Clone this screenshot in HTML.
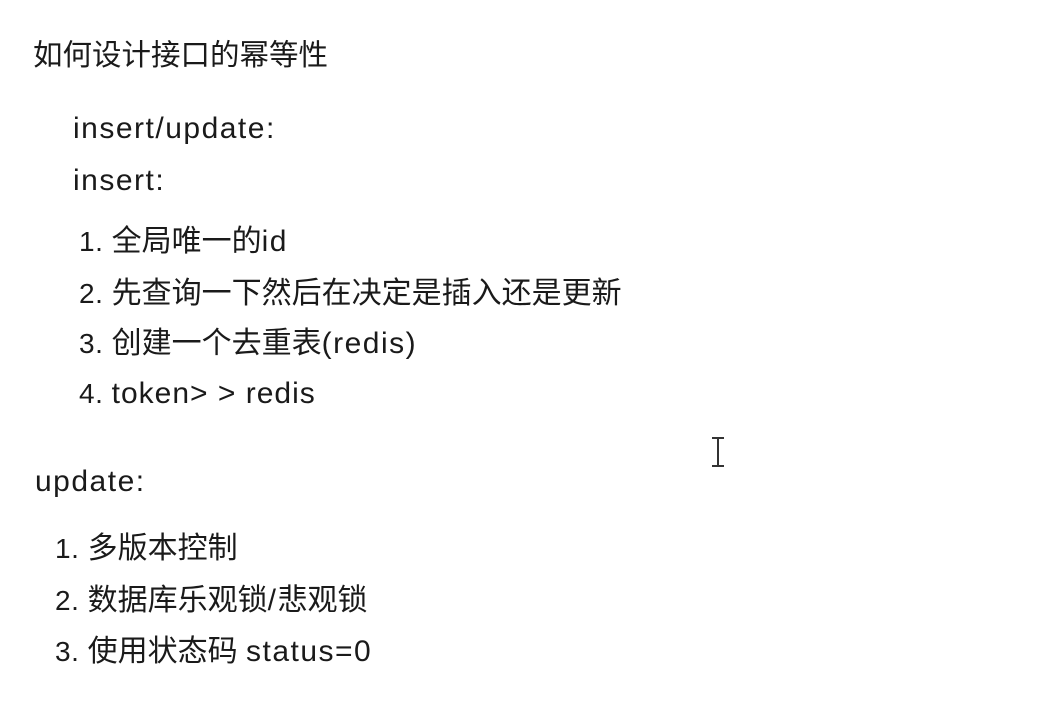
<!DOCTYPE html>
<html><head><meta charset="utf-8"><style>
body{margin:0;width:1051px;height:703px;background:#fff;overflow:hidden;position:relative;font-family:"Liberation Sans","Noto Sans CJK SC",sans-serif;color:#1a1a1a}
div.t{position:absolute;line-height:40px;white-space:nowrap;font-size:30px}
.l{font-size:30px;letter-spacing:1.5px}
.n{font-size:28px;letter-spacing:0.5px}
.k{font-size:30px;letter-spacing:1px}
</style></head><body>
<div class="t" style="left:33px;top:36px;font-size:29.5px">如何设计接口的幂等性</div>
<div class="t l" style="left:73px;top:109px">insert/update:</div>
<div class="t l" style="left:73px;top:161px">insert:</div>
<div class="t" style="left:79px;top:222px"><span class="n">1. </span>全局唯一的<span class="l">id</span></div>
<div class="t" style="left:79px;top:274px"><span class="n">2. </span>先查询一下然后在决定是插入还是更新</div>
<div class="t" style="left:79px;top:324px"><span class="n">3. </span>创建一个去重表<span class="l">(redis)</span></div>
<div class="t" style="left:79px;top:374px"><span class="n">4. </span><span class="k">token&gt; &gt; redis</span></div>
<div class="t l" style="left:35px;top:462px">update:</div>
<div class="t" style="left:55px;top:529px"><span class="n">1. </span>多版本控制</div>
<div class="t" style="left:55px;top:581px"><span class="n">2. </span>数据库乐观锁<span class="l">/</span>悲观锁</div>
<div class="t" style="left:55px;top:632px"><span class="n">3. </span>使用状态码 <span class="l">status=0</span></div>
<svg style="position:absolute;left:710px;top:436px" width="16" height="32"><path d="M2 2H14M8 2V30M2 30H14" stroke="#333" stroke-width="2" fill="none"/></svg>
</body></html>
